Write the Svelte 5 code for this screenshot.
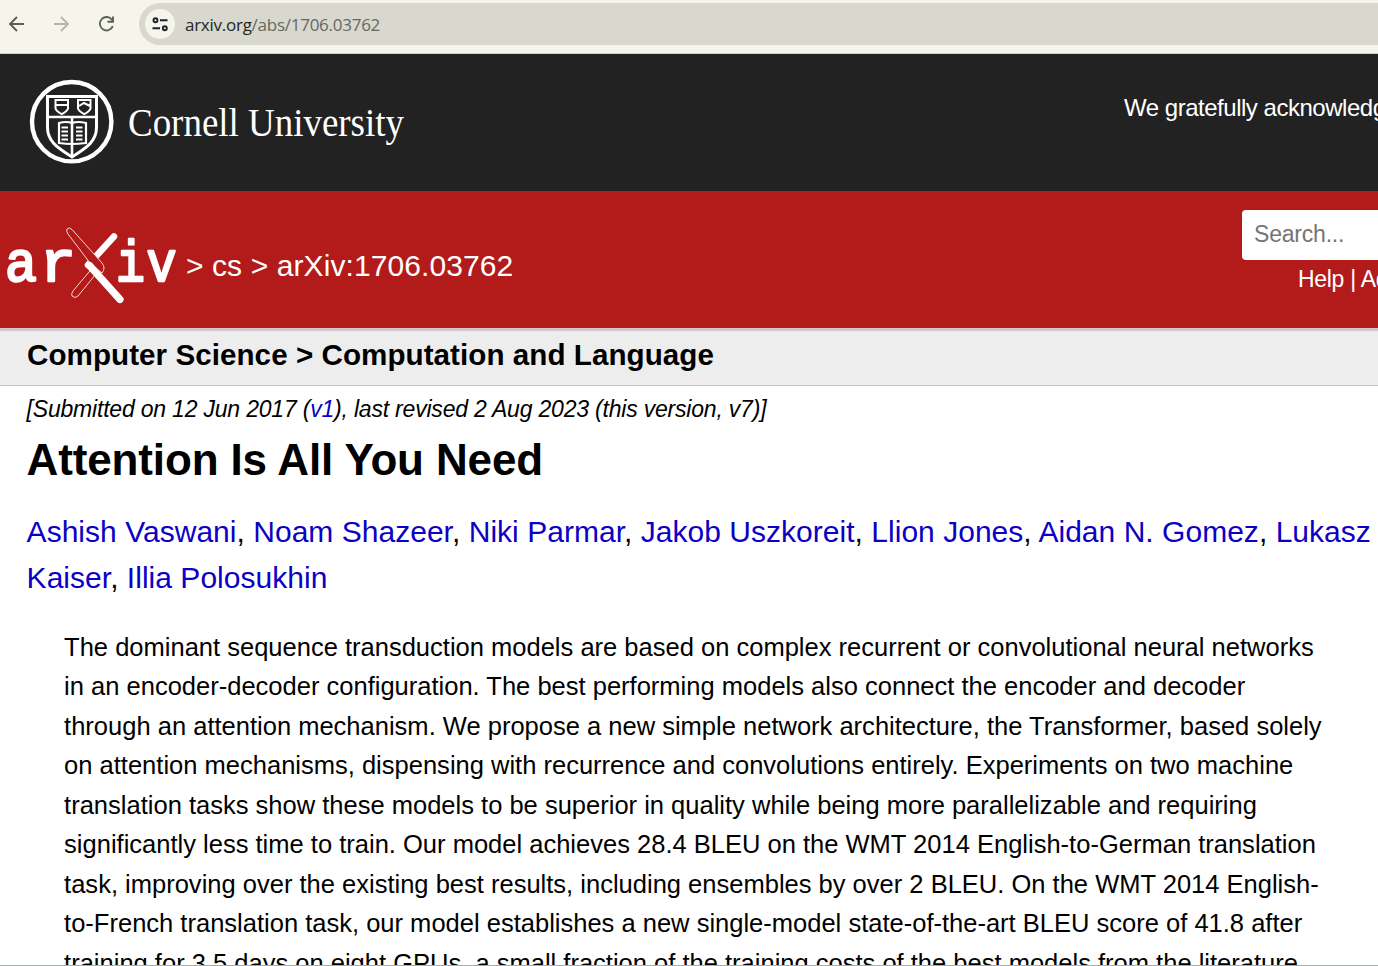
<script>
  const authors = [
    ['Ashish Vaswani', 'Noam Shazeer', 'Niki Parmar', 'Jakob Uszkoreit', 'Llion Jones', 'Aidan N. Gomez', 'Lukasz'],
    ['Kaiser', 'Illia Polosukhin']
  ];
  const abstract = [
    'The dominant sequence transduction models are based on complex recurrent or convolutional neural networks',
    'in an encoder-decoder configuration. The best performing models also connect the encoder and decoder',
    'through an attention mechanism. We propose a new simple network architecture, the Transformer, based solely',
    'on attention mechanisms, dispensing with recurrence and convolutions entirely. Experiments on two machine',
    'translation tasks show these models to be superior in quality while being more parallelizable and requiring',
    'significantly less time to train. Our model achieves 28.4 BLEU on the WMT 2014 English-to-German translation',
    'task, improving over the existing best results, including ensembles by over 2 BLEU. On the WMT 2014 English-',
    'to-French translation task, our model establishes a new single-model state-of-the-art BLEU score of 41.8 after',
    'training for 3.5 days on eight GPUs, a small fraction of the training costs of the best models from the literature.'
  ];
</script>

<div class="page">
  <div class="toolbar">
    <svg class="nav" viewBox="0 0 130 48" aria-hidden="true">
      <g fill="none" stroke="#5d5e5b" stroke-width="1.9">
        <path d="M24 24H10.500M17 17l-7 7 7 7" />
        <path stroke="#b5b6b0" d="M54 24h13.500M61 17l7 7-7 7" />
        <path d="M112.300 20.200A6.700 6.700 0 1 0 112.800 26.200" />
        <path d="M113 16.500v5.200h-5.500" />
      </g>
    </svg>
    <div class="omnibox">
      <div class="site">
        <svg viewBox="0 0 30 30" aria-hidden="true">
          <g fill="none" stroke="#202124" stroke-width="1.9">
            <circle cx="10.500" cy="11.300" r="2" /><path d="M15 11.300h7.500M7.500 19.300h7.500" /><circle cx="19.800" cy="19.300" r="2" />
          </g>
        </svg>
      </div>
      <span class="url">arxiv.org<span>/abs/1706.03762</span></span>
    </div>
  </div>

  <header class="cornell">
    <svg class="culogo" viewBox="0 0 380 90" role="img" aria-label="Cornell University">
      <g fill="none" stroke="#fff" stroke-width="2.6">
        <circle cx="44.7" cy="44.7" r="39.7" stroke-width="4.4" />
        <path stroke-width="3" d="M20.500 19.500h49v31c0 15-12 21-24.500 29.500C32.500 71.500 20.500 65.500 20.500 50.500z" />
        <path d="M20.500 40h49M45 40v39" />
        <path stroke-width="2" d="M28.500 23h12.500v8.500q-1 3-6.200 5.700-5.300-2.700-6.300-5.700zM51 23h12.500v8.500q-1 3-6.200 5.700-5.300-2.700-6.300-5.700zM29 28h12M52 29l5-3 6 3" />
        <path stroke-width="2.200" d="M45 46q-6-2-13 0v20q7 1 13 1 6 0 14-1v-20q-8-2-14 0" />
        <path stroke-width="1.800" d="M34.500 50.500h6.500M34.500 54.500h6.500M34.500 58.500h6.500M34.500 62.500h6.500M49 50.500h6.500M49 54.500h6.500M49 58.500h6.500M49 62.500h6.500" />
      </g>
      <text x="101" y="58.500" textLength="276" lengthAdjust="spacingAndGlyphs">Cornell University</text>
    </svg>
    <span class="thanks">We gratefully acknowledge</span>
  </header>

  <div class="arxiv">
    <svg class="axlogo" viewBox="0 0 180 90" role="img" aria-label="arXiv">
      <g class="letters">
        <text x="5" y="58.500" textLength="32" lengthAdjust="spacingAndGlyphs">a</text>
        <text x="40" y="58.500" textLength="36" lengthAdjust="spacingAndGlyphs">r</text>
        <text x="116" y="58.500" textLength="29" lengthAdjust="spacingAndGlyphs">i</text>
        <text x="146.500" y="58.500" textLength="30" lengthAdjust="spacingAndGlyphs">v</text>
      </g>
      <path d="M114 14.500L88 43" stroke="#fff" stroke-width="6.500" stroke-linecap="round" />
      <path d="M100 47L78 74Q75 77 72 74 71 72 73 69L94 44" fill="#b31b1b" stroke="#f5d5d5" stroke-width="1" />
      <path d="M72 7.500Q69 4.500 67 7 66 9 68 12L90 41 102 51Q106 46 102 41z" fill="#b31b1b" stroke="#f5d5d5" stroke-width="1" />
      <path d="M89.500 43.500L120 77.500" stroke="#fff" stroke-width="7.200" stroke-linecap="round" />
    </svg>
    <span class="crumb">&gt; cs &gt; arXiv:1706.03762</span>
    <div class="searcharea">
      <div class="search">Search...</div>
      <div class="help">Help | Advanced Search</div>
    </div>
  </div>

  <div class="subject">Computer Science &gt; Computation and Language</div>

  <main>
    <div class="date">[Submitted on 12 Jun 2017 (<a href="#v1">v1</a>), last revised 2 Aug 2023 (this version, v7)]</div>
    <h1>Attention Is All You Need</h1>
    <div class="authors">
      {#each authors as row}
        <div>{#each row as name, i}<a href="#author">{name}</a>{#if i < row.length - 1}{', '}{/if}{/each}</div>
      {/each}
    </div>
    <div class="abstract">
      {#each abstract as text}
        <div>{text}</div>
      {/each}
    </div>
  </main>
  <div class="edge"></div>
</div>

<style>
  :global(body) { margin: 0; overflow: hidden; }
  .page { width: 1378px; height: 966px; overflow: hidden; display: flex; flex-direction: column; background: #fff; color: #000; font-family: "Liberation Sans", Arial, sans-serif; white-space: nowrap; }
  .page > div, header { flex-shrink: 0; box-sizing: border-box; }
  .toolbar { height: 54px; background: #f5f5eb; border-bottom: 1px solid #cfd0ca; display: flex; align-items: flex-start; }
  .nav { width: 130px; height: 48px; flex: none; }
  .omnibox { margin: 3px 0 0 9px; flex: 1; height: 42px; border-radius: 21px 0 0 21px; background: #d8d8cf; display: flex; align-items: center; }
  .site { width: 30px; height: 30px; margin-left: 6px; border-radius: 50%; background: #f5f5eb; }
  .site svg { display: block; width: 30px; height: 30px; }
  .url { margin-left: 10px; padding-top: 1px; font: 17px/24px "Open Sans", "Noto Sans", sans-serif; letter-spacing: -0.26px; color: #252622; }
  .url span { color: #666761; }
  .cornell { height: 137px; background: #222; display: flex; justify-content: space-between; }
  .culogo { width: 380px; height: 90px; margin: 23px 0 0 27px; }
  .culogo text { font: 39px "Liberation Serif", serif; fill: #fff; }
  .thanks { width: 254px; overflow: hidden; color: #fff; font-size: 24px; letter-spacing: -0.48px; line-height: 28px; margin-top: 40px; }
  .arxiv { height: 137px; background: #b31b1b; color: #fff; display: flex; }
  .axlogo { width: 180px; height: 90px; margin-top: 31px; flex: none; }
  .letters { font: 58px "Liberation Mono", monospace; fill: #fff; stroke: #fff; stroke-width: 2.4; stroke-linejoin: round; }
  .crumb { font-size: 30px; letter-spacing: 0.09px; line-height: 36px; margin: 57px 0 0 6px; }
  .searcharea { width: 136px; margin-left: auto; padding-top: 19px; overflow: hidden; font-size: 23px; }
  .search { height: 50px; box-sizing: border-box; width: 180px; padding-left: 12px; letter-spacing: -0.2px; background: #fff; color: #757575; line-height: 48px; border-radius: 4px; }
  .help { margin: 5px 0 0 56px; line-height: 28px; letter-spacing: -0.3px; }
  .subject { height: 58px; background: #ededed; border-top: 3px solid #d5c7c7; border-bottom: 1px solid #c5c5c5; padding-left: 27px; font-weight: bold; font-size: 29.600px; letter-spacing: 0.05px; line-height: 48px; }
  main { flex: 1; min-height: 0; overflow: hidden; padding-left: 26.600px; }
  .date { font-style: italic; font-size: 23px; letter-spacing: -0.2px; line-height: 28px; margin-top: 9px; }
  a { color: #0c00c4; text-decoration: none; }
  h1 { margin: 11px 0 0; font-size: 44px; letter-spacing: -0.14px; line-height: 52px; }
  .authors { margin-top: 23px; font-size: 30px; letter-spacing: 0.025px; line-height: 46px; }
  .abstract { margin: 26.800px 0 0 37.500px; font-size: 25.520px; line-height: 39.500px; }
  .edge { height: 1px; background: #a9adab; }
</style>
